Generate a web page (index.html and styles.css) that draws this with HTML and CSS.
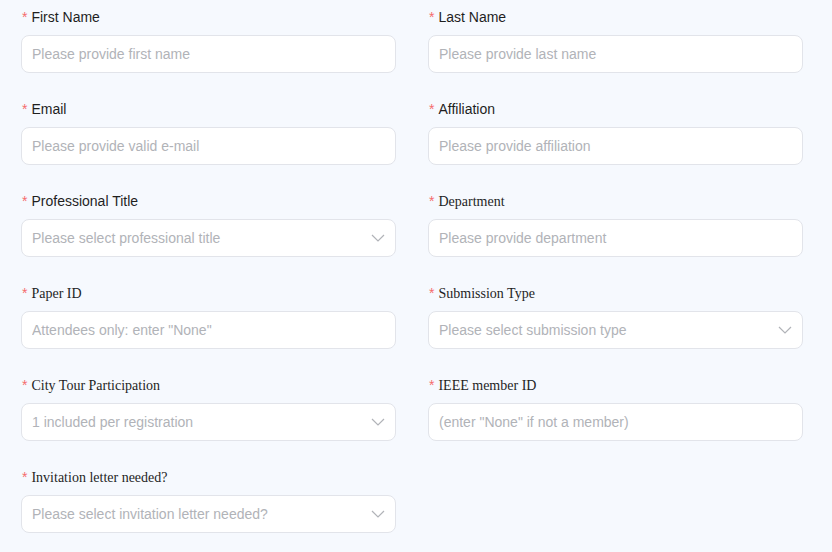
FILE: index.html
```html
<!DOCTYPE html>
<html lang="en">
<head>
    <meta charset="UTF-8">
    <title>Registration</title>
    <link rel="stylesheet" href="styles.css">
</head>
<body>
    <form class="reg-form">
        <div class="form-item">
            <label class="form-label"><span class="req">*</span>First Name</label>
            <input class="form-input" type="text" placeholder="Please provide first name">
        </div>
        <div class="form-item">
            <label class="form-label"><span class="req">*</span>Last Name</label>
            <input class="form-input" type="text" placeholder="Please provide last name">
        </div>

        <div class="form-item">
            <label class="form-label"><span class="req">*</span>Email</label>
            <input class="form-input" type="text" placeholder="Please provide valid e-mail">
        </div>
        <div class="form-item">
            <label class="form-label"><span class="req">*</span>Affiliation</label>
            <input class="form-input" type="text" placeholder="Please provide affiliation">
        </div>

        <div class="form-item">
            <label class="form-label"><span class="req">*</span>Professional Title</label>
            <div class="form-select">
                <span class="select-text">Please select professional title</span>
                <svg class="chevron" width="14" height="8" viewBox="0 0 14 8"><path d="M1 1l6 6 6-6" fill="none" stroke="currentColor" stroke-width="1.2"/></svg>
            </div>
        </div>
        <div class="form-item">
            <label class="form-label serif"><span class="req">*</span>Department</label>
            <input class="form-input" type="text" placeholder="Please provide department">
        </div>

        <div class="form-item">
            <label class="form-label serif"><span class="req">*</span>Paper ID</label>
            <input class="form-input" type="text" placeholder="Attendees only: enter &quot;None&quot;">
        </div>
        <div class="form-item">
            <label class="form-label serif"><span class="req">*</span>Submission Type</label>
            <div class="form-select">
                <span class="select-text">Please select submission type</span>
                <svg class="chevron" width="14" height="8" viewBox="0 0 14 8"><path d="M1 1l6 6 6-6" fill="none" stroke="currentColor" stroke-width="1.2"/></svg>
            </div>
        </div>

        <div class="form-item">
            <label class="form-label serif"><span class="req">*</span>City Tour Participation</label>
            <div class="form-select">
                <span class="select-text">1 included per registration</span>
                <svg class="chevron" width="14" height="8" viewBox="0 0 14 8"><path d="M1 1l6 6 6-6" fill="none" stroke="currentColor" stroke-width="1.2"/></svg>
            </div>
        </div>
        <div class="form-item">
            <label class="form-label serif"><span class="req">*</span>IEEE member ID</label>
            <input class="form-input" type="text" placeholder="(enter &quot;None&quot; if not a member)">
        </div>

        <div class="form-item">
            <label class="form-label serif"><span class="req">*</span>Invitation letter needed?</label>
            <div class="form-select">
                <span class="select-text">Please select invitation letter needed?</span>
                <svg class="chevron" width="14" height="8" viewBox="0 0 14 8"><path d="M1 1l6 6 6-6" fill="none" stroke="currentColor" stroke-width="1.2"/></svg>
            </div>
        </div>
    </form>
</body>
</html>
```

FILE: styles.css
```css
* {
    box-sizing: border-box;
    margin: 0;
    padding: 0;
}

body {
    font-family: "Liberation Sans", Arial, sans-serif;
    background-color: #f6f9fe;
    color: #1f1f1f;
}

.reg-form {
    display: grid;
    grid-template-columns: 375px 375px;
    column-gap: 32px;
    padding: 6px 29px 0 21px;
}

.form-item {
    margin-bottom: 25px;
}

.form-label {
    display: block;
    height: 22px;
    line-height: 22px;
    font-size: 14px;
    margin-bottom: 7px;
}

.form-label.serif {
    font-family: "Liberation Serif", "Times New Roman", serif;
}

.req {
    color: #f56c6c;
    font-family: "Liberation Sans", Arial, sans-serif;
    margin-left: 1px;
    margin-right: 4px;
}

.form-input,
.form-select {
    display: flex;
    align-items: center;
    width: 100%;
    height: 38px;
    padding: 0 10px;
    background-color: #fff;
    border: 1px solid #e2e4ea;
    border-radius: 8px;
    font-family: "Liberation Sans", Arial, sans-serif;
    font-size: 14px;
    color: #303133;
    outline: none;
}

.form-input::placeholder {
    color: #b1b3b8;
}

.form-select {
    justify-content: space-between;
}

.select-text {
    color: #b1b3b8;
}

.chevron {
    color: #b1b3b8;
}
```
